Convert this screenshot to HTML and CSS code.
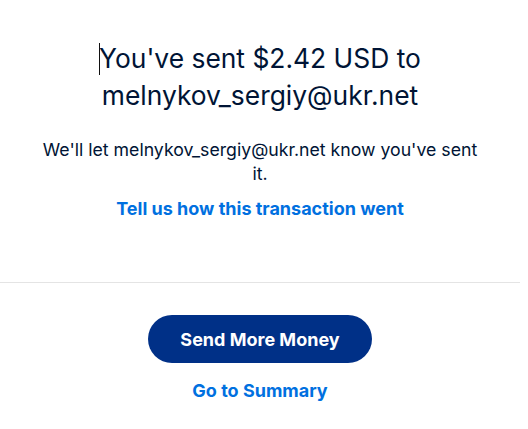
FILE: index.html
```html
<!DOCTYPE html>
<html>
<head>
<meta charset="utf-8">
<link rel="stylesheet" href="styles.css">
</head>
<body>
<main class="page">
  <section class="confirm">
    <h1 class="title"><span class="caret"></span>You've sent $2.42 USD to melnykov_sergiy@ukr.net</h1>
    <p class="note">We'll let melnykov_sergiy@ukr.net know you've sent it.</p>
    <a class="link feedback" href="#">Tell us how this transaction went</a>
  </section>
  <hr class="divider">
  <section class="actions">
    <button class="primary" type="button">Send More Money</button>
    <a class="link summary" href="#">Go to Summary</a>
  </section>
</main>
</body>
</html>
```
FILE: styles.css
```css
* { box-sizing: border-box; }
html, body { margin: 0; background: #fff; }
body {
  font-family: Inter, "Noto Sans", sans-serif;
  color: #001435;
  height: 429px;
  overflow: hidden;
}
.page {
  display: flex;
  flex-direction: column;
  width: 520px;
}
.confirm {
  display: flex;
  flex-direction: column;
  align-items: center;
  padding: 40px 30px 0;
  text-align: center;
}
.title {
  margin: 0;
  font-size: 26.4px;
  font-weight: 400;
  line-height: 37px;
  width: 360px;
}
.caret {
  display: inline-block;
  width: 1px;
  height: 32px;
  margin-right: -1px;
  vertical-align: -7px;
  background: #111;
}
.note {
  margin: 24px 0 0;
  font-size: 17.7px;
  line-height: 24px;
  width: 448px;
}
.link {
  color: #0070e0;
  font-weight: 700;
  text-decoration: none;
  font-size: 18px;
  line-height: 22px;
}
.feedback { margin-top: 12px; }
.divider {
  margin: 62px 0 0;
  border: 0;
  height: 1px;
  background: #e4e4e4;
}
.actions {
  display: flex;
  flex-direction: column;
  align-items: center;
  padding-top: 32px;
}
.primary {
  width: 224px;
  height: 48px;
  border: 0;
  border-radius: 24px;
  background: #003087;
  color: #fff;
  font-family: inherit;
  font-size: 18px;
  font-weight: 700;
}
.summary { margin-top: 17px; }
```
